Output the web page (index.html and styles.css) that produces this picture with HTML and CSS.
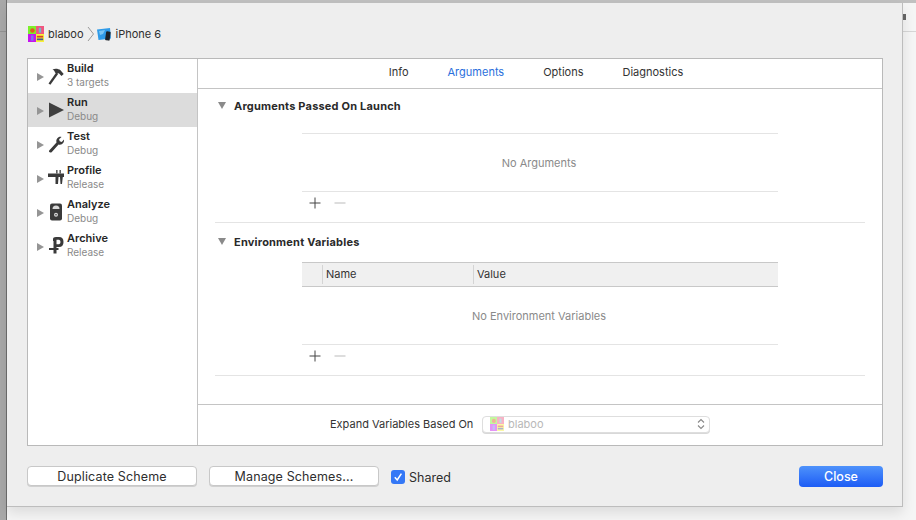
FILE: index.html
```html
<!DOCTYPE html>
<html lang="en">
<head>
<meta charset="utf-8">
<title>Scheme editor</title>
<link rel="stylesheet" href="styles.css">
</head>
<body>
<svg class="defs" width="0" height="0" aria-hidden="true">
  <symbol id="app" viewBox="0 0 18 18">
    <rect width="9" height="9" fill="#7cf02a"/>
    <rect x="9" width="9" height="9" fill="#f0567e"/>
    <rect y="9" width="9" height="9" fill="#c414ee"/>
    <rect x="9" y="9" width="9" height="9" fill="#f8f03a"/>
    <circle cx="5" cy="5" r="2.6" fill="#e2581e"/>
    <rect x="12.2" y="2" width="2.6" height="5.5" fill="#74b8c8"/>
    <rect x="3.4" y="10.5" width="2.8" height="6" fill="#7a7ae8"/>
    <rect x="10" y="11" width="7" height="2" fill="#d8402a"/>
    <rect x="10" y="14" width="7" height="2" fill="#4a5a8a"/>
  </symbol>
</svg>
<div class="side-strip"></div>
<div class="side-line"></div>
<div class="right-mark"></div>
<div class="right-line"></div>
<main class="sheet">
  <header class="crumbs">
    <svg class="crumb-app" width="16" height="16"><use href="#app"/></svg>
    <span class="crumb-text">blaboo</span>
    <svg class="crumb-sep" width="8" height="16" viewBox="0 0 8 16"><path d="M1 1l5.5 7L1 15" fill="none" stroke="#9a9a9a" stroke-width="1"/></svg>
    <svg class="crumb-dev" width="16" height="14" viewBox="0 0 16 14">
      <path d="M1 2.500 14 1l1 10.500L2.500 13z" fill="#2f9be8"/>
      <path d="M3 4l6-1-2 4-3 1z" fill="#7cc6f4"/>
      <rect x="9.600" y="4.500" width="4.600" height="9" rx="1" fill="#1d2228" transform="rotate(8 12 9)"/>
    </svg>
    <span class="crumb-text">iPhone 6</span>
  </header>

  <section class="panel">
    <nav class="sidebar">
      <div class="action">
        <span class="tri"></span>
        <svg class="a-icon" width="20" height="20" viewBox="0 0 20 20"><path d="M2.500 17.500 10.200 6.600l1.900 1.400L4.400 18.800z" fill="#3a3a3a"/><path d="M6.500 3.500c2.600-1.200 6-.8 8 .8l3.200 3.600-2.200 2-2.700-2.600-2.200.4-1.600-1.200c-.4-1.400-1-2.400-2.500-3z" fill="#3a3a3a"/></svg>
        <div class="a-text"><b>Build</b><small>3 targets</small></div>
      </div>
      <div class="action selected">
        <span class="tri"></span>
        <svg class="a-icon" width="20" height="20" viewBox="0 0 20 20"><path d="M3 2.500 18 10 3 17.500z" fill="#3f3f3f"/></svg>
        <div class="a-text"><b>Run</b><small>Debug</small></div>
      </div>
      <div class="action">
        <span class="tri"></span>
        <svg class="a-icon" width="20" height="20" viewBox="0 0 20 20"><path d="M3.200 16.600 10.500 8.400c-.6-2.200.2-4.200 2-5.200 1-.5 2-.6 3-.3l-2.400 2.400.6 2 2 .6 2.300-2.300c.3 2-.5 3.700-2.200 4.600-1 .5-2.200.6-3.200.2L5.600 18.200c-1.400 1-3.400-.2-2.400-1.600z" fill="#3a3a3a"/></svg>
        <div class="a-text"><b>Test</b><small>Debug</small></div>
      </div>
      <div class="action">
        <span class="tri"></span>
        <svg class="a-icon" width="20" height="20" viewBox="0 0 20 20"><path d="M2 5.500h16V9h-1.200l-.8 7h-1.500l-.5-7h-1.500l-.5 7H9.500V9H2z" fill="#3a3a3a"/><path d="M10.200 2h1.300v3.500h-1.300zM13.500 2h1.300v3.500h-1.300z" fill="#3a3a3a"/></svg>
        <div class="a-text"><b>Profile</b><small>Release</small></div>
      </div>
      <div class="action">
        <span class="tri"></span>
        <svg class="a-icon" width="20" height="20" viewBox="0 0 20 20"><rect x="4" y="1.500" width="12" height="17" rx="2" fill="#3a3a3a"/><path d="M6.500 7a3.500 3.500 0 0 1 7 0z" fill="#d8d8d8"/><circle cx="10" cy="12.800" r="2" fill="#d8d8d8"/><circle cx="10" cy="12.800" r=".8" fill="#3a3a3a"/></svg>
        <div class="a-text"><b>Analyze</b><small>Debug</small></div>
      </div>
      <div class="action">
        <span class="tri"></span>
        <svg class="a-icon" width="20" height="20" viewBox="0 0 20 20"><path fill-rule="evenodd" d="M7 3Q7 1 10 1H13Q17.500 1 17.500 6 17.500 11 13 11H10.500V12H12.500V14H10.500V17.500H7.500V14H3V12H7.500V5H7zM10.500 3.800V8.200H13Q14.500 8 14.500 6 14.500 4 13 3.800z" fill="#3a3a3a"/></svg>
        <div class="a-text"><b>Archive</b><small>Release</small></div>
      </div>
    </nav>

    <div class="detail">
      <div class="tabs">
        <span class="tab">Info</span>
        <span class="tab active">Arguments</span>
        <span class="tab">Options</span>
        <span class="tab">Diagnostics</span>
      </div>

      <div class="body">
        <section class="group group-args">
          <h2 class="group-title"><span class="disc"></span>Arguments Passed On Launch</h2>
          <div class="table">
            <div class="empty empty-args">No Arguments</div>
            <div class="tools">
              <svg width="12" height="12" viewBox="0 0 12 12"><path d="M6 .5v11M.5 6h11" stroke="#444" fill="none"/></svg>
              <svg width="12" height="12" viewBox="0 0 12 12"><path d="M.5 6h11" stroke="#bbb" fill="none"/></svg>
            </div>
          </div>
        </section>

        <section class="group group-env">
          <h2 class="group-title"><span class="disc"></span>Environment Variables</h2>
          <div class="table">
            <div class="thead">
              <span class="th th-check"></span>
              <span class="th th-name">Name</span>
              <span class="th th-value">Value</span>
            </div>
            <div class="empty empty-env">No Environment Variables</div>
            <div class="tools">
              <svg width="12" height="12" viewBox="0 0 12 12"><path d="M6 .5v11M.5 6h11" stroke="#444" fill="none"/></svg>
              <svg width="12" height="12" viewBox="0 0 12 12"><path d="M.5 6h11" stroke="#bbb" fill="none"/></svg>
            </div>
          </div>
        </section>
      </div>

      <div class="expand">
        <span class="expand-label">Expand Variables Based On</span>
        <div class="select">
          <svg class="select-app" width="14" height="14"><use href="#app"/></svg>
          <span class="select-text">blaboo</span>
          <svg class="select-arrows" width="8" height="12" viewBox="0 0 8 12"><path d="M1 4.500 4 1.500l3 3M1 7.500l3 3 3-3" fill="none" stroke="#888" stroke-width="1.100"/></svg>
        </div>
      </div>
    </div>
  </section>

  <footer class="footer">
    <button class="btn btn-dup">Duplicate Scheme</button>
    <button class="btn btn-man">Manage Schemes...</button>
    <label class="shared">
      <span class="check"><svg width="10" height="10" viewBox="0 0 10 10"><path d="M1.800 5.200 4.200 8 8.400 1.600" fill="none" stroke="#fff" stroke-width="1.500"/></svg></span>
      Shared
    </label>
    <button class="btn-close">Close</button>
  </footer>
</main>
</body>
</html>
```
FILE: styles.css
```css
* { box-sizing: border-box; }
html, body { margin: 0; height: 100%; }
body {
  width: 916px;
  height: 520px;
  overflow: hidden;
  position: relative;
  background: linear-gradient(#c0c0c0 0 3px, #f5f5f5 3px);
  font-family: Inter, "Liberation Sans", sans-serif;
  color: #2e2e2e;
  padding: 3px 0 0 7px;
}
.defs { position: absolute; }
.side-strip {
  position: absolute;
  left: 0; top: 0;
  width: 7px; height: 520px;
  background: #a8a8a8;
  border-right: 1px solid #6e6e6e;
}
.side-line {
  position: absolute;
  left: 0; top: 31px;
  width: 6px; height: 1px;
  background: #929292;
}
.right-mark {
  position: absolute;
  left: 903px; top: 14px;
  width: 3px; height: 6px;
  background: #666;
}
.right-line {
  position: absolute;
  left: 903px; top: 31px;
  width: 13px; height: 1px;
  background: #d6d6d6;
}
.sheet {
  position: relative;
  width: 896px;
  height: 504px;
  background: #eeeeee;
  border: 1px solid #bdbdbd;
  border-top: 0;
  border-left: 0;
  box-shadow: 0 6px 12px rgba(0,0,0,.1);
  padding: 0 19px 0 20px;
  display: flex;
  flex-direction: column;
}
.crumbs {
  height: 55px;
  padding-top: 23px;
  display: flex;
  align-items: flex-start;
}
.crumb-app { margin-left: 1px; }
.crumb-text { font-size: 11px; line-height: 17px; margin-left: 4px; }
.crumb-sep { margin: 0 0 0 3px; }
.crumb-dev { margin: 1px 0 0 1px; }
.panel {
  height: 388px;
  background: #fff;
  border: 1px solid #b9b9b9;
  display: flex;
}
.sidebar {
  width: 170px;
  border-right: 1px solid #c4c4c4;
  flex: none;
}
.action {
  height: 34px;
  display: flex;
  align-items: center;
  padding-left: 9px;
}
.action.selected { background: #dcdcdc; }
.tri {
  width: 0; height: 0;
  border-left: 7px solid #959595;
  border-top: 4.5px solid transparent;
  border-bottom: 4.5px solid transparent;
  margin-top: 1px;
}
.a-icon { margin-left: 2px; flex: none; }
.a-text { display: flex; flex-direction: column; margin-left: 1px; margin-top: -3px; }
.a-text b { font-size: 11px; line-height: 14px; font-weight: 600; color: #262626; }
.a-text small { font-size: 10px; line-height: 14px; color: #8a8a8a; }
.detail { flex: 1; display: flex; flex-direction: column; min-width: 0; }
.tabs {
  height: 30px;
  border-bottom: 1px solid #c4c4c4;
  display: flex;
  justify-content: center;
  align-items: center;
  gap: 39px;
  font-size: 11px;
  color: #333;
  padding: 0 8px 4px 0;
}
.tab.active { color: #2a6fdc; }
.body { flex: 1; padding: 0 17px; }
.group { border-bottom: 1px solid #e4e4e4; }
.group-args { height: 134px; padding-top: 10px; }
.group-env { height: 153px; padding-top: 12px; }
.group-title {
  margin: 0;
  font-size: 11px;
  line-height: 14px;
  font-weight: 700;
  letter-spacing: .2px;
  color: #2a2a2a;
  display: flex;
  align-items: center;
}
.disc {
  width: 0; height: 0;
  border-top: 7px solid #8a8a8a;
  border-left: 4.5px solid transparent;
  border-right: 4.5px solid transparent;
  margin: -1px 8px 0 3px;
}
.table { width: 476px; margin-left: 87px; }
.group-args .table { margin-top: 20px; border-top: 1px solid #e4e4e4; }
.group-env .table { margin-top: 13px; }
.empty {
  display: flex;
  align-items: center;
  justify-content: center;
  font-size: 11px;
  color: #8a8a8a;
  border-bottom: 1px solid #e4e4e4;
  padding-right: 2px;
}
.empty-args { height: 58px; }
.empty-env { height: 58px; }
.thead {
  height: 25px;
  background: #f0f0f0;
  border-top: 1px solid #c8c8c8;
  border-bottom: 1px solid #c8c8c8;
  display: flex;
  align-items: center;
  font-size: 11px;
  color: #333;
}
.th { height: 19px; line-height: 19px; border-left: 1px solid #d4d4d4; padding-left: 3px; }
.th-check { width: 20px; border-left: 0; padding: 0; }
.th-name { width: 151px; }
.tools { height: 22px; display: flex; align-items: center; gap: 13px; padding-left: 7px; }
.expand {
  height: 41px;
  border-top: 1px solid #c4c4c4;
  display: flex;
  align-items: center;
  font-size: 11px;
  color: #333;
  padding: 0 0 2px 132px;
}
.expand-label { width: 152px; }
.select {
  width: 228px;
  height: 17px;
  background: #fff;
  border: 1px solid #dedede;
  border-radius: 4px;
  box-shadow: 0 1px 0 #d8d8d8;
  display: flex;
  align-items: center;
  padding: 0 4px 0 7px;
  color: #b8b8b8;
}
.select-app { opacity: .45; flex: none; }
.select-text { margin-left: 4px; flex: 1; }
.footer {
  display: flex;
  align-items: flex-start;
  padding-top: 20px;
  font-size: 12.5px;
}
.btn {
  width: 170px;
  height: 20px;
  background: #fff;
  border: 1px solid #c8c8c8;
  border-radius: 4px;
  box-shadow: 0 1px 0 #d0d0d0;
  font: inherit;
  letter-spacing: .13px;
  color: #2e2e2e;
  padding: 0;
}
.btn-man { margin-left: 12px; }
.shared { display: flex; align-items: center; margin-left: 12px; height: 22px; color: #2e2e2e; }
.check {
  width: 14px; height: 14px;
  background: #3478f6;
  border-radius: 3px;
  margin-right: 4px;
  display: flex;
  align-items: center;
  justify-content: center;
}
.btn-close {
  margin-left: auto;
  width: 84px;
  height: 21px;
  border: 0;
  border-radius: 4px;
  background: linear-gradient(#4e92fb, #1d5cf5);
  color: #fff;
  font: inherit;
  font-weight: 500;
  padding: 0;
}
```
